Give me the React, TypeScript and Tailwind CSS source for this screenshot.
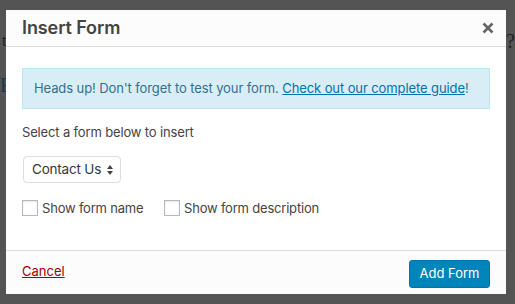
import React from "react";

export default function App() {
  const font = { fontFamily: "Inter, 'Noto Sans', 'Liberation Sans', sans-serif" };
  return (
    <div className="relative w-[515px] h-[304px] overflow-hidden bg-[#545454]" style={font}>
      <span className="absolute left-[2px] top-[29px] text-[16px] text-[#1e1e1e]" style={{ fontFamily: "'Liberation Serif', serif" }}>t</span>
      <span className="absolute left-[506px] top-[26px] text-[20px] text-[#1e1e1e]" style={{ fontFamily: "'Liberation Serif', serif" }}>?</span>
      <span className="absolute left-0 top-[70px] text-[20px] text-[#123a50]" style={{ fontFamily: "'Liberation Serif', serif" }}>F</span>
      <div className="relative pt-[10px] pl-[6px]">
        <div className="relative w-[500px] h-[284px] bg-white flex flex-col">
          <div className="h-[37px] flex items-center justify-between px-4 bg-[#fcfcfc] border-b border-[#dddddd]">
            <span className="text-[18px] font-semibold text-[#444444] leading-none tracking-[-0.1px]">Insert Form</span>
            <svg width="12" height="12" viewBox="0 0 12 12" className="mr-[-4px]">
              <path d="M1.5 1.5 L10.5 10.5 M10.5 1.5 L1.5 10.5" stroke="#666666" strokeWidth="2.6" strokeLinecap="butt" />
            </svg>
          </div>
          <div className="flex-1 px-4 pt-[21px]">
            <div className="h-[41px] flex items-center pl-[11px] bg-[#d9edf7] border border-[#bce8f1] text-[13px] tracking-[-0.1px] text-[#31708f]">
              <span>
                Heads up! Don't forget to test your form.{" "}
                <span className="underline text-[#0073aa]">Check out our complete guide</span>!
              </span>
            </div>
            <div className="mt-[14px] text-[13px] tracking-[-0.15px] text-[#444444] leading-[18px]">Select a form below to insert</div>
            <div className="mt-[15px] w-[98px] h-[27px] ml-[1px] flex items-center justify-between pl-[8px] pr-[7px] border border-[#dddddd] rounded-[4px] bg-white">
              <span className="text-[13.5px] tracking-[-0.2px] text-[#32373c]">Contact Us</span>
              <svg width="6" height="10" viewBox="0 0 6 10">
                <path d="M3 0 L6 4 L0 4 Z M0 6 L6 6 L3 10 Z" fill="#444444" />
              </svg>
            </div>
            <div className="mt-[17px] flex items-center text-[13px] leading-[16px] tracking-[-0.2px] text-[#444444] whitespace-nowrap">
              <span className="shrink-0 w-4 h-4 border border-[#b4b9be] bg-white shadow-[inset_0_1px_2px_rgba(0,0,0,0.1)]" />
              <span className="shrink-0 ml-[4px] w-[101px]">Show form name</span>
              <span className="shrink-0 ml-[21px] w-4 h-4 border border-[#b4b9be] bg-white shadow-[inset_0_1px_2px_rgba(0,0,0,0.1)]" />
              <span className="shrink-0 ml-[4px]">Show form description</span>
            </div>
          </div>
          <div className="h-[44px] flex items-center justify-between px-4 bg-[#fcfcfc] border-t border-[#dddddd]">
            <span className="text-[13px] text-[#a00000] underline mt-[-2px]">Cancel</span>
            <button className="w-[81px] h-[28px] rounded-[3px] bg-[#0085ba] border border-[#0073aa] text-white text-[13px] mt-[2px]">Add Form</button>
          </div>
        </div>
      </div>
    </div>
  );
}
